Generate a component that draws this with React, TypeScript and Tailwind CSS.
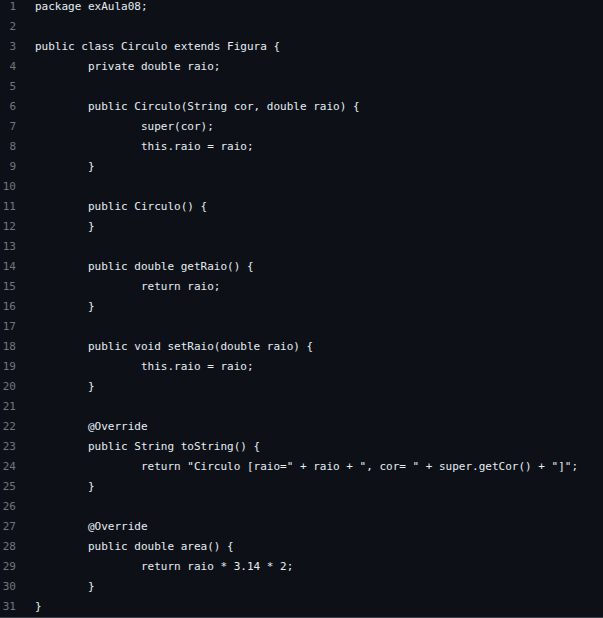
const lines = [
  "package exAula08;",
  "",
  "public class Circulo extends Figura {",
  "\tprivate double raio;",
  "",
  "\tpublic Circulo(String cor, double raio) {",
  "\t\tsuper(cor);",
  "\t\tthis.raio = raio;",
  "\t}",
  "",
  "\tpublic Circulo() {",
  "\t}",
  "",
  "\tpublic double getRaio() {",
  "\t\treturn raio;",
  "\t}",
  "",
  "\tpublic void setRaio(double raio) {",
  "\t\tthis.raio = raio;",
  "\t}",
  "",
  "\t@Override",
  "\tpublic String toString() {",
  '\t\treturn "Circulo [raio=" + raio + ", cor= " + super.getCor() + "]";',
  "\t}",
  "",
  "\t@Override",
  "\tpublic double area() {",
  "\t\treturn raio * 3.14 * 2;",
  "\t}",
  "}",
];

export default function App() {
  return (
    <div className="w-[603px] h-[618px] bg-[#0d1117] overflow-hidden border-b border-[#3d444d] font-['DejaVu_Sans_Mono',monospace] text-[11px] leading-[20px]">
      <div className="-mt-[3px]">
        {lines.map((line, i) => (
          <div key={i} className="flex">
            <span className="w-[16px] shrink-0 text-right text-[#6e7681]">{i + 1}</span>
            <span className="pl-[19px] whitespace-pre [tab-size:8] text-[#e6edf3]">{line}</span>
          </div>
        ))}
      </div>
    </div>
  );
}
